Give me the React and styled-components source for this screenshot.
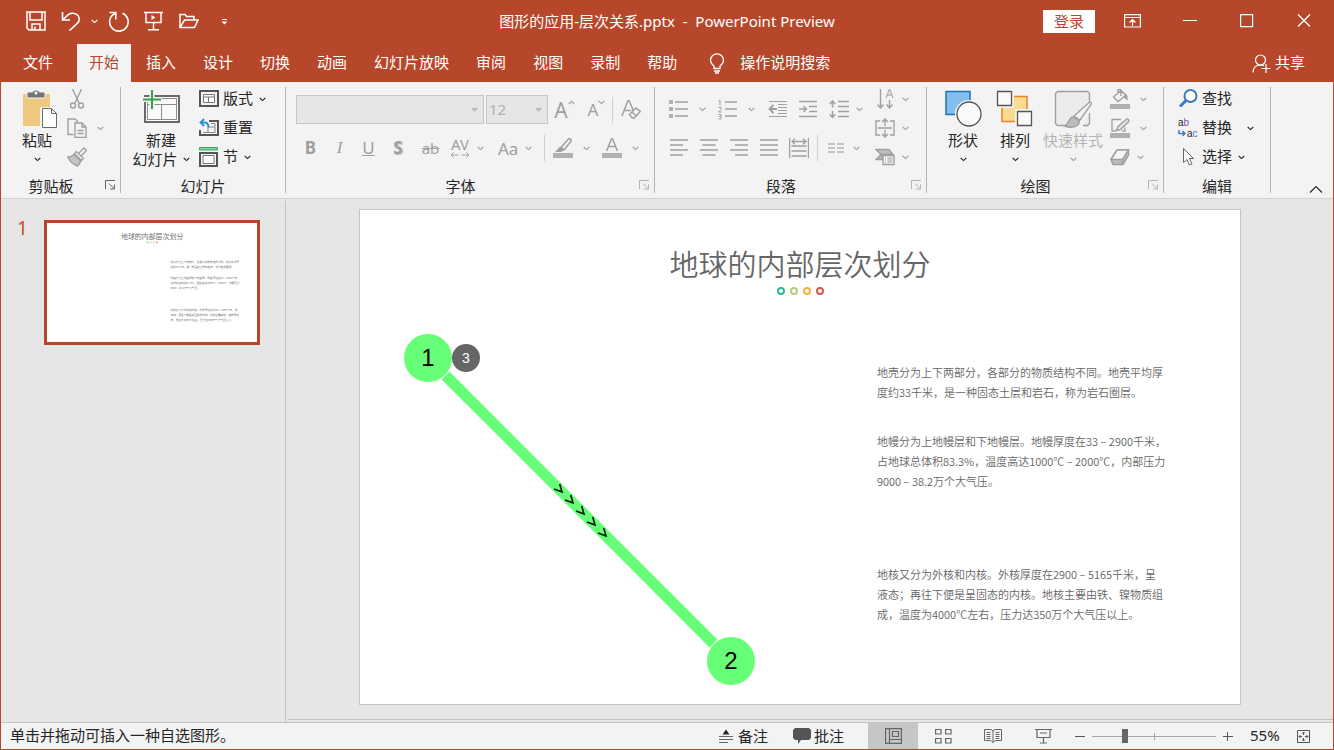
import React, { useState } from "react";
import styled, { createGlobalStyle, css } from "styled-components";

function App() {
  return (
    <>
      <GlobalStyle />
      <Window>
        <Header>
          <TitleBar />
          <TabBar />
        </Header>
        <Ribbon>
          <ClipboardGroup />
          <SlidesGroup />
          <FontGroup />
          <ParagraphGroup />
          <DrawingGroup />
          <EditingGroup />
          <Collapse aria-label="折叠功能区">
            <Icon w={14} h={8} sw={1.1}>
              <path d="M1 7.5 7 1.5l6 6" />
            </Icon>
          </Collapse>
        </Ribbon>
        <Workspace>
          <ThumbPane>
            <ThumbNumber>1</ThumbNumber>
            <Thumb>
              <ThumbScale>
                <SlideContent />
              </ThumbScale>
            </Thumb>
          </ThumbPane>
          <Stage>
            <Slide>
              <SlideContent />
              <Diagram />
            </Slide>
          </Stage>
        </Workspace>
        <StatusBar />
      </Window>
    </>
  );
}

export default App;

function Icon({ w = 20, h = 20, sw = 1, children }) {
  return (
    <svg
      width={w}
      height={h}
      viewBox={`0 0 ${w} ${h}`}
      fill="none"
      stroke="currentColor"
      strokeWidth={sw}
      aria-hidden="true"
    >
      {children}
    </svg>
  );
}

function Caret() {
  return (
    <Icon w={7} h={5} sw={1.1}>
      <path d="M.7 1 3.5 3.6 6.3 1" />
    </Icon>
  );
}

function TitleBar() {
  return (
    <TitleRow>
      <QuickAccess>
        <BarButton aria-label="保存">
          <Icon sw={1.5}>
            <path d="M1 1h18v18H3L1 17zM4 1v8h12V1M6 19v-6h8v6M9 15.5v3" />
          </Icon>
        </BarButton>
        <BarButton aria-label="撤消">
          <Icon sw={1.6}>
            <path d="M1.5 1v8H9M1.5 9 7 3.8C9 2 13 1.4 16 3.6c3.2 2.6 2.8 6.3.3 8.7L8.5 19.5" />
          </Icon>
        </BarButton>
        <BarButton $w={13} aria-label="撤消选项">
          <Caret />
        </BarButton>
        <BarButton aria-label="重复">
          <Icon w={21} h={21} sw={1.6}>
            <path d="M14.5 2.2A9.3 9.3 0 1 1 4 4.5L7.5 1.8M1.5 1.5h6.3v7" />
          </Icon>
        </BarButton>
        <BarButton aria-label="从头开始">
          <Icon sw={1.5}>
            <path d="M0 1.5h19M2 2v9.5h15V2M9.5 12v6.5M4 18.7h11" />
            <path d="M7.5 4v5l4-2.5z" fill="currentColor" stroke="none" />
          </Icon>
        </BarButton>
        <BarButton aria-label="打开">
          <Icon w={20} h={16} sw={1.5}>
            <path d="M1 14.5V1.5h5l1.5 2H15V7M1 14.5 5.5 7H19l-3.5 7.5z" />
          </Icon>
        </BarButton>
        <BarButton $w={37} aria-label="自定义快速访问工具栏">
          <Icon w={7} h={8}>
            <path d="M1 2.5h5" />
            <path d="M.5 4.5h6l-3 3z" fill="currentColor" stroke="none" />
          </Icon>
        </BarButton>
      </QuickAccess>
      <DocTitle>{"图形的应用-层次关系.pptx  -  PowerPoint Preview"}</DocTitle>
      <WindowControls>
        <SignIn>登录</SignIn>
        <BarButton $w={57} aria-label="功能区显示选项">
          <Icon w={17} h={14} sw={1.2}>
            <path d="M.6.6h15.8V13H.6zM.5 3.5h16M8.500 12V6M5.500 8.500l3-3 3 3" />
          </Icon>
        </BarButton>
        <BarButton $w={57} aria-label="最小化">
          <Icon w={14} h={14}>
            <path d="M0 6.500h14" />
          </Icon>
        </BarButton>
        <BarButton $w={57} aria-label="最大化">
          <Icon w={14} h={14} sw={1.2}>
            <path d="M.6.6h12v12H.6z" />
          </Icon>
        </BarButton>
        <BarButton $w={57} aria-label="关闭">
          <Icon w={14} h={14} sw={1.4}>
            <path d="m1 .5 12 12M13 .5 1 12.500" />
          </Icon>
        </BarButton>
      </WindowControls>
    </TitleRow>
  );
}

const tabs = ["开始", "插入", "设计", "切换", "动画", "幻灯片放映", "审阅", "视图", "录制", "帮助"];

function TabBar() {
  const [active, setActive] = useState("开始");
  return (
    <TabRow>
      <FileTab>文件</FileTab>
      {tabs.map((tab) => (
        <Tab key={tab} $active={tab === active} onClick={() => setActive(tab)}>
          {tab}
        </Tab>
      ))}
      <TellMe>
        <Icon w={16} h={21} sw={1.3}>
          <path d="M5 15.5V13C3 11.5 1.5 10 1.5 7.3a6.500 6.500 0 0 1 13 0C14.5 10 13 11.5 11 13v2.500zM5 18h6M6 20h4" />
        </Icon>
        <Label>操作说明搜索</Label>
      </TellMe>
      <Share>
        <Icon w={19} h={19} sw={1.2}>
          <circle cx="8.5" cy="6" r="5" />
          <path d="M1 18.5c0-5 3-7.5 7.5-7.5 1.5 0 2.5.3 3.5.8M14 10v9M9.5 14.5h9" />
        </Icon>
        <Label>共享</Label>
      </Share>
    </TabRow>
  );
}

function Group({ title, width, launcher, muted, children }) {
  return (
    <GroupBox $w={width}>
      <GroupBody>{children}</GroupBody>
      <GroupFooter>
        <GroupTitle>{title}</GroupTitle>
        {launcher && (
          <Launcher $muted={muted} aria-label={title + "设置"}>
            <Icon w={11} h={10}>
              <path d="M.5 9V.5H10M4 3.5l5.5 5.5M9.5 4.5V9H5" />
            </Icon>
          </Launcher>
        )}
      </GroupFooter>
    </GroupBox>
  );
}

function ClipboardGroup() {
  return (
    <Group title="剪贴板" width={120} launcher>
      <LargeButton $w={56} $start={8}>
        <Icon w={40} h={40}>
          <path d="M6 4h27v32H6z" fill="#edc87e" stroke="none" />
          <path d="M10 2h5.500a4 4 0 0 1 7 0H28v6H10z" fill="#757575" stroke="#f3f3f3" />
          <circle cx="19" cy="3" r="1.500" fill="#fff" stroke="none" />
          <path d="M23 17h11l7 7v14H23z" fill="#f3f3f3" stroke="none" />
          <path d="M25.500 18.500h9l5 5v14h-14zM34.500 18.500v5h5" fill="#fff" stroke="#6a6a6a" />
        </Icon>
        <span>粘贴</span>
        <CaretLine>
          <Caret />
        </CaretLine>
      </LargeButton>
      <Stack>
        <ToolButton disabled aria-label="剪切">
          <Icon sw={1.4}>
            <path d="M5.5 0 12 14M14.5 0 8 14" />
            <circle cx="6" cy="16.500" r="2.500" />
            <circle cx="14" cy="16.500" r="2.500" />
          </Icon>
        </ToolButton>
        <ToolButton disabled $gap={10} aria-label="复制">
          <Icon sw={1.4}>
            <path d="M6.5 16.5H1V1h7l3 3" />
            <path d="M8 5h7l4 4v10.5H8zM15 5v4h4M10.5 12.5h6M10.5 15.5h6" />
          </Icon>
          <Caret />
        </ToolButton>
        <ToolButton disabled aria-label="格式刷">
          <Icon sw={1.4}>
            <path d="m12 6 5-5 2.500 2.500-5 5M9.500 4.500l7 7-2 2-7-7z" />
            <path d="M7 7.500C5 9.500 3 10 .8 10c2 4 6.200 8 9.700 9 1.500-1.500 3-3.500 3-5z" fill="#c4c4c4" />
          </Icon>
        </ToolButton>
      </Stack>
    </Group>
  );
}

function SlidesGroup() {
  return (
    <Group title="幻灯片" width={165}>
      <LargeButton $w={64} $start={8}>
        <Icon w={38} h={40}>
          <path d="M3 6h34v26H3z" fill="#fafafa" stroke="#6a6a6a" strokeWidth="2" />
          <path d="M5.500 8.500h29v21h-29zM6 14.500h28M19.500 14.500V29" stroke="#8c8c8c" />
          <path d="M10 0v20M0 9.500h20" stroke="#f3f3f3" strokeWidth="5" />
          <path d="M10 0v19M1 9.500h18" stroke="#2fa350" strokeWidth="2" />
        </Icon>
        <span>新建</span>
        <CaretLine>
          幻灯片
          <Caret />
        </CaretLine>
      </LargeButton>
      <Stack $pad={4}>
        <ToolButton $gap={4}>
          <Icon>
            <path d="M1 2h18v15H1z" stroke="#555" strokeWidth="2" />
            <path d="M4.500 5.500h11v8h-11zM4.500 8h11M9.500 8v5.500" stroke="#777" fill="#fff" />
          </Icon>
          <Label>版式</Label>
          <Caret />
        </ToolButton>
        <ToolButton $gap={4}>
          <Icon>
            <path d="M10 3h9v14H1v-5" stroke="#555" strokeWidth="2" />
            <path d="M4 14.500h12v-9h-4M9 9h7M9 9v5" stroke="#8a8a8a" />
            <path d="M5 1 1.500 4.500 5 8M2 4.500h3.500c3 0 4 2 4 5" stroke="#2b8fd8" strokeWidth="1.800" />
          </Icon>
          <Label>重置</Label>
        </ToolButton>
        <ToolButton $gap={4}>
          <Icon>
            <path d="M.5.5h18v2.500H.5z" fill="#8fd0a4" stroke="#3ba55d" />
            <path d="M1 6h17v13H1z" stroke="#555" strokeWidth="2" />
            <path d="M4 8.500h11v8H4z" fill="#fff" stroke="#777" />
          </Icon>
          <Label>节</Label>
          <Caret />
        </ToolButton>
      </Stack>
    </Group>
  );
}

function Dropdown({ label, value, width }) {
  return (
    <SelectBox $w={width}>
      <select aria-label={label} disabled defaultValue={value}>
        <option>{value}</option>
      </select>
      <Icon w={7} h={4}>
        <path d="M0 0h7L3.500 4z" fill="currentColor" stroke="none" />
      </Icon>
    </SelectBox>
  );
}

function FontGroup() {
  return (
    <Group title="字体" width={369} launcher muted>
      <Rows>
        <Row $h={29}>
          <Dropdown label="字体" value="" width={188} />
          <SizeGap />
          <Dropdown label="字号" value="12" width={62} />
          <GlyphButton disabled $w={33} $size={21} aria-label="增大字号">
            A
            <Raised>
              <Icon w={7} h={5} sw={1.2}>
                <path d="M.7 4 3.500 1.400 6.300 4" />
              </Icon>
            </Raised>
          </GlyphButton>
          <GlyphButton disabled $w={31} $size={17} aria-label="减小字号">
            A
            <Raised>
              <Caret />
            </Raised>
          </GlyphButton>
          <Divider />
          <GlyphButton disabled $w={36} aria-label="清除所有格式">
            <Icon sw={1.5}>
              <path d="M1 16 7 .5h1L13 12M3.500 10.500H10" />
              <path d="m8.500 14.500 6.500-6.500 4.300 3.500-6 6.500h-2zM11 12l4.500 4" fill="#f3f3f3" />
            </Icon>
          </GlyphButton>
        </Row>
        <Row $h={26}>
          <GlyphButton disabled $w={29}>
            <b>B</b>
          </GlyphButton>
          <GlyphButton disabled $w={29}>
            <Serif>I</Serif>
          </GlyphButton>
          <GlyphButton disabled $w={29}>
            <u>U</u>
          </GlyphButton>
          <GlyphButton disabled $w={30}>
            <Shadowed>S</Shadowed>
          </GlyphButton>
          <GlyphButton disabled $w={35} $size={15}>
            <Struck>ab</Struck>
          </GlyphButton>
          <ToolButton disabled $w={48} $gap={7}>
            <Spacing>
              AV
              <Icon h={6}>
                <path d="M8.500 3H1M3.500.5 1 3l2.500 2.500M11.500 3H19M16.500.5 19 3l-2.500 2.500" />
              </Icon>
            </Spacing>
            <Caret />
          </ToolButton>
          <ToolButton disabled $w={48} $gap={7} $size={17}>
            Aa
            <Caret />
          </ToolButton>
          <Divider $after={6} />
          <ToolButton disabled $w={49} $gap={10} aria-label="文本突出显示颜色">
            <Icon>
              <path d="M0 15h20v5H0z" fill="#b0b0b0" stroke="none" />
              <path d="M8 9.500 15.500 1c1-1 3.500 1 2.500 2.300L11 12zM7.500 9.500l3.500 3" strokeWidth="1.500" />
              <path d="M7 8.500 2 14h6l3-2z" fill="currentColor" stroke="none" />
            </Icon>
            <Caret />
          </ToolButton>
          <ToolButton disabled $w={49} $gap={10} aria-label="字体颜色">
            <Icon>
              <path d="M0 15h20v5H0z" fill="#b0b0b0" stroke="none" />
              <path d="M4.500 13 9.700.5h.6L15.500 13M6.500 8.500h7" strokeWidth="1.500" />
            </Icon>
            <Caret />
          </ToolButton>
        </Row>
      </Rows>
    </Group>
  );
}

function ParagraphGroup() {
  return (
    <Group title="段落" width={272} launcher muted>
      <Rows $start={12} $w={206}>
        <Row $h={29}>
          <ToolButton disabled $w={49} $gap={10} aria-label="项目符号">
            <Icon>
              <path d="M0 0h4v4H0zM0 7h4v4H0zM0 14h4v4H0z" fill="#b0b0b0" stroke="none" />
              <path d="M6 2h13M6 9h13M6 16h13" strokeWidth="1.500" />
            </Icon>
            <Caret />
          </ToolButton>
          <ToolButton disabled $w={49} $gap={10} aria-label="编号">
            <Icon>
              <path d="M.5 1 2 .5v5M.5 7.500h2.500v2l-2.500 2.500h3M.5 14.500h2.500v4.500H.5M1 16.500h2" />
              <path d="M7 2h12M7 9h12M7 16h12" strokeWidth="1.500" />
            </Icon>
            <Caret />
          </ToolButton>
          <ToolButton disabled $w={31} aria-label="减少缩进">
            <Icon>
              <path d="M2 1.500h18M11 4.500h9M11 7.500h9M11 10.500h9M11 13.500h9M2 16.500h18" />
              <path d="M10 9H3M6.500 5l-4 4 4 4" strokeWidth="1.800" />
            </Icon>
          </ToolButton>
          <ToolButton disabled $w={31} aria-label="增加缩进">
            <Icon>
              <path d="M1 1.500h18M11 6.500h8M11 11.500h8M1 16.500h18" strokeWidth="1.500" />
              <path d="M1 9h7M5.500 6l3 3-3 3" strokeWidth="1.400" />
            </Icon>
          </ToolButton>
          <ToolButton disabled $gap={7} aria-label="行距">
            <Icon>
              <path d="M3.500 1v6.500M.8 4l2.700-3 2.700 3M3.500 11v6.500M.8 14.500l2.700 3 2.700-3M9 1.500h11M9 6.500h11M9 11.500h11M9 16.500h11" strokeWidth="1.500" />
            </Icon>
            <Caret />
          </ToolButton>
        </Row>
        <Row $h={26}>
          <ToolButton disabled $w={30} aria-label="左对齐">
            <Icon>
              <path d="M1 2h18M1 7h13M1 12h18M1 17h13" strokeWidth="1.500" />
            </Icon>
          </ToolButton>
          <ToolButton disabled $w={30} aria-label="居中">
            <Icon>
              <path d="M1 2h18M3.500 7h13M1 12h18M3.500 17h13" strokeWidth="1.500" />
            </Icon>
          </ToolButton>
          <ToolButton disabled $w={30} aria-label="右对齐">
            <Icon>
              <path d="M1 2h18M6 7h13M1 12h18M6 17h13" strokeWidth="1.500" />
            </Icon>
          </ToolButton>
          <ToolButton disabled $w={30} aria-label="两端对齐">
            <Icon>
              <path d="M1 2h18M1 7h18M1 12h18M1 17h18" strokeWidth="1.500" />
            </Icon>
          </ToolButton>
          <ToolButton disabled $w={30} aria-label="分散对齐">
            <Icon>
              <path d="M.5 0v20M19.500 0v20M2.500 8h15M2.500 13h15M2.500 18h15M3 3.500h14M6 .8 3 3.500l3 2.700M14 .8l3 2.700-3 2.700" strokeWidth="1.400" />
            </Icon>
          </ToolButton>
          <Divider $after={6} />
          <ToolButton disabled $gap={7} aria-label="分栏">
            <Icon>
              <path d="M2 6h7M2 10h7M2 14h7M11 6h7M11 10h7M11 14h7" strokeWidth="1.400" stroke="#b4b4b4" />
            </Icon>
            <Caret />
          </ToolButton>
        </Row>
      </Rows>
      <Stack>
        <ToolButton disabled $gap={7} aria-label="文字方向">
          <Icon sw={1.4}>
            <path d="M5.500 0v19M2.500 15.500l3 3.500 3-3.500M14.500 11v8M11.500 15.500l3 3.500 3-3.500" />
            <path d="m11 9 3.300-8.500h.4L18 9M12 6h5" stroke="#b5b5b5" />
          </Icon>
          <Caret />
        </ToolButton>
        <ToolButton disabled $gap={7} aria-label="对齐文本">
          <Icon sw={1.4}>
            <path d="M5 3H1v14h4M15 3h4v14h-4M3 10h14M10 1v7M7 4l3-3 3 3M10 12v7M7 16l3 3 3-3" />
          </Icon>
          <Caret />
        </ToolButton>
        <ToolButton disabled $gap={7} aria-label="转换为 SmartArt">
          <Icon sw={1.4}>
            <path d="M1 2.500h13l4 5H6zM1 12.500l5-5 2 5z" fill="#bdbdbd" />
            <path d="M8 8.500h11v9H8z" fill="#f3f3f3" />
            <path d="M10 11h1M12.500 11h5M10 13h1M12.500 13h5M10 15h1M12.500 15h5" strokeWidth="1" />
          </Icon>
          <Caret />
        </ToolButton>
      </Stack>
    </Group>
  );
}

function DrawingGroup() {
  return (
    <Group title="绘图" width={237} launcher muted>
      <LargeButton $w={52} $start={10}>
        <Icon w={38} h={40}>
          <path d="M2 1.500h24v23H2z" fill="#83beec" stroke="#1e73bc" strokeWidth="1.500" />
          <circle cx="25" cy="24" r="14" fill="#f3f3f3" stroke="none" />
          <circle cx="25" cy="24" r="12" fill="#fafafa" stroke="#555" strokeWidth="1.300" />
        </Icon>
        <span>形状</span>
        <CaretLine>
          <Caret />
        </CaretLine>
      </LargeButton>
      <LargeButton $w={52}>
        <Icon w={38} h={40}>
          <path d="M6 6.500h25v25H6z" fill="#f8dc8f" stroke="#e8832a" strokeWidth="1.500" />
          <path d="M0 0h18v18H0zM19 19h18v18H19z" fill="#f3f3f3" stroke="none" />
          <path d="M1.500 1.500h14v14h-14zM21.500 21.500h14v14h-14z" fill="#fafafa" stroke="#555" strokeWidth="1.300" />
        </Icon>
        <span>排列</span>
        <CaretLine>
          <Caret />
        </CaretLine>
      </LargeButton>
      <LargeButton $w={64} disabled>
        <Icon w={38} h={40} sw={1.4}>
          <path d="M12 35.500H3.500l-2-2v-30l2-2h30l2 2V13M35.500 23v10.500l-2 2H29" fill="#ececec" />
          <path d="M20 26 34.500 13c2-1.300 3.500-.3 2.500 1.500L26 30z" fill="#f3f3f3" />
          <path d="M19 27c-4 0-4 7-8 9 5 2.500 14 1.500 14.500-5z" fill="#bdbdbd" />
        </Icon>
        <span>快速样式</span>
        <CaretLine>
          <Caret />
        </CaretLine>
      </LargeButton>
      <Stack $pad={3}>
        <ToolButton disabled $gap={10} aria-label="形状填充">
          <Icon>
            <path d="M0 15h20v5H0z" fill="#b0b0b0" stroke="none" />
            <path d="M3.500 8 11 1.500l5 4.500-8 6.500zM8 5V1.500c0-1.500 3-1.500 3 0V7" strokeWidth="1.400" />
            <path d="M15.500 5c2 1 2.500 3.500 2 7-1-2-3-3-4-4z" fill="currentColor" stroke="none" />
          </Icon>
          <Caret />
        </ToolButton>
        <ToolButton disabled $gap={10} aria-label="形状轮廓">
          <Icon>
            <path d="M0 15h20v5H0z" fill="#b0b0b0" stroke="none" />
            <path d="M11 1.500H2V13h4M15 9.500V13h-3" strokeWidth="1.300" />
            <path d="M6.500 12.500 8 8.500 16.500 1c1.500-.5 3 1.500 2 2.800L10.500 11.500z" fill="#e3e3e3" strokeWidth="1.400" />
          </Icon>
          <Caret />
        </ToolButton>
        <ToolButton disabled $gap={7} aria-label="形状效果">
          <Icon sw={1.5}>
            <path d="M1 12.500 7 3h11.500v5L13 17.500H3z" fill="#bdbdbd" />
            <path d="M1 12.500 7 3h11.500l-6 9.500z" fill="#f6f6f6" />
            <path d="M12.500 12.500v5" />
          </Icon>
          <Caret />
        </ToolButton>
      </Stack>
    </Group>
  );
}

function EditingGroup() {
  return (
    <Group title="编辑" width={107}>
      <Stack $start={12}>
        <ToolButton $gap={4}>
          <Icon>
            <circle cx="12.500" cy="7" r="6" fill="#fff" stroke="#3e7ab8" strokeWidth="2" />
            <path d="M8 11.500 2 17.500" stroke="#3e7ab8" strokeWidth="3" />
          </Icon>
          <Label>查找</Label>
        </ToolButton>
        <ToolButton $gap={4}>
          <ReplaceMark>
            <span>
              a<i>b</i>
            </span>
            <span>
              <Icon w={9} h={7}>
                <path d="M1 0v3.500h6M4.500 1 7 3.500 4.500 6" stroke="#3e7ab8" strokeWidth="1.400" />
              </Icon>
              a<em>c</em>
            </span>
          </ReplaceMark>
          <Label>替换</Label>
          <ReplaceCaret>
            <Caret />
          </ReplaceCaret>
        </ToolButton>
        <ToolButton $gap={4}>
          <Icon>
            <path d="M5.500 1.500v14l3.500-3 2.500 5.500 2.500-1-2.500-5.500h4z" fill="#fff" stroke="#666" />
          </Icon>
          <Label>选择</Label>
          <Caret />
        </ToolButton>
      </Stack>
    </Group>
  );
}

const dotColors = ["#2fb39b", "#b3cc7e", "#f3b13e", "#cf5b49"];

function SlideContent() {
  return (
    <Content>
      <SlideTitle>地球的内部层次划分</SlideTitle>
      <Dots>
        {dotColors.map((color) => (
          <Dot key={color} $color={color} />
        ))}
      </Dots>
      <Copy>
        <p>
          地壳分为上下两部分，各部分的物质结构不同。地壳平均厚
          <br />
          度约33千米，是一种固态土层和岩石，称为岩石圈层。
        </p>
        <p>
          地幔分为上地幔层和下地幔层。地幔厚度在33 – 2900千米，
          <br />
          占地球总体积83.3%，温度高达1000℃ – 2000℃，内部压力
          <br />
          9000 – 38.2万个大气压。
        </p>
        <p>
          地核又分为外核和内核。外核厚度在2900 – 5165千米，呈
          <br />
          液态；再往下便是呈固态的内核。地核主要由铁、镍物质组
          <br />
          成，温度为4000℃左右，压力达350万个大气压以上。
        </p>
      </Copy>
    </Content>
  );
}

function Diagram() {
  return (
    <DiagramLayer width="880" height="494" viewBox="0 0 880 494">
      <path d="M85.500 165.500 353.500 433.500" stroke="#66ff77" strokeWidth="11" />
      {[0, 1, 2, 3, 4].map((i) => (
        <path
          key={i}
          transform={`translate(${202 + i * 11} ${282 + i * 11})`}
          d="M-2.300-8 0 0-8-3"
          fill="none"
          stroke="#111"
          strokeWidth="1.600"
        />
      ))}
      <circle cx="68" cy="148" r="24" fill="#66ff77" />
      <circle cx="371" cy="451" r="24" fill="#66ff77" />
      <circle cx="106" cy="148" r="14" fill="#666" />
      <text x="68" y="156" fontSize="24">
        1
      </text>
      <text x="371" y="459" fontSize="24">
        2
      </text>
      <text x="106" y="153" fontSize="14" fill="#fff">
        3
      </text>
    </DiagramLayer>
  );
}

function StatusBar() {
  const [zoom, setZoom] = useState(25);
  return (
    <StatusRow>
      <Hint>单击并拖动可插入一种自选图形。</Hint>
      <StatusButton $gap={5} $end={25}>
        <Icon w={14} h={14}>
          <path d="M3.500 5.500h7L7 .5z" fill="currentColor" stroke="none" />
          <path d="M0 7.500h14M0 10.500h14M0 13.500h9" stroke="#666" />
        </Icon>
        <StatusLabel>备注</StatusLabel>
      </StatusButton>
      <StatusButton $gap={3} $end={24}>
        <Icon w={18} h={16}>
          <path d="M2 0h14l2 2v8l-2 2H8l-3 4v-4H2l-2-2V2z" fill="#555" stroke="none" />
        </Icon>
        <StatusLabel>批注</StatusLabel>
      </StatusButton>
      <ViewButton $active aria-label="普通视图">
        <Icon w={17} h={16} sw={1.2}>
          <path d="M.6.6h15.800v14.800H.6zM4.500.6v14.800M4.500 11.500h12M7.500 3.500h6v5h-6z" />
        </Icon>
      </ViewButton>
      <ViewButton aria-label="幻灯片浏览">
        <Icon w={17} h={16} sw={1.2}>
          <path d="M.6 1.500h5.400v4.500H.6zM10.600 1.500H16v4.500h-5.400zM.6 10.500h5.400V15H.6zM10.600 10.500H16V15h-5.400z" />
        </Icon>
      </ViewButton>
      <ViewButton aria-label="阅读视图">
        <Icon w={18} h={16}>
          <path d="M.5 1.500H7L9 3l2-1.500h6.500v11H11l-2 2-2-2H.5zM9 3v12" />
          <path d="M2.500 4.500h4M2.500 6.500h4M2.500 8.500h4M2.500 10.500h4M11.500 4.500h4M11.500 6.500h4M11.500 8.500h4M11.500 10.500h4" />
        </Icon>
      </ViewButton>
      <ViewButton aria-label="幻灯片放映">
        <Icon w={17} h={16} sw={1.2}>
          <path d="M0 1.500h17M2 1.500v8h13v-8M5 5h7M8.500 9.500v5M5 15h7" />
        </Icon>
      </ViewButton>
      <ZoomButton aria-label="缩小">
        <Icon w={10} h={11}>
          <path d="M0 5.500h10" />
        </Icon>
      </ZoomButton>
      <ZoomSlider
        type="range"
        aria-label="缩放"
        value={zoom}
        onChange={(e) => setZoom(Number(e.target.value))}
      />
      <ZoomButton aria-label="放大">
        <Icon w={10} h={11}>
          <path d="M0 5.500h10M4.500 1v9" />
        </Icon>
      </ZoomButton>
      <ZoomValue>55%</ZoomValue>
      <ZoomButton aria-label="使幻灯片适应当前窗口">
        <Icon w={13} h={13}>
          <path d="M.5.5h12v12H.5zM6.500 2v3M6.500 8v3M2 6.500h3M8 6.500h3M5 3.500 6.500 2 8 3.500M5 9.500 6.500 11 8 9.500M3.500 5 2 6.500 3.500 8M9.500 5 11 6.500 9.500 8" />
        </Icon>
      </ZoomButton>
    </StatusRow>
  );
}

const GlobalStyle = createGlobalStyle`
  * {
    box-sizing: border-box;
  }
  body {
    margin: 0;
    color: #262626;
    font-family: "Noto Sans", "Noto Sans CJK SC", sans-serif;
    font-size: 15px;
  }
  button {
    display: flex;
    align-items: center;
    margin: 0;
    padding: 0;
    border: 0;
    background: none;
    color: inherit;
    font: inherit;
    white-space: nowrap;
  }
  button:disabled {
    color: #a0a0a0;
  }
  svg {
    display: block;
    flex: none;
  }
`;
const Window = styled.div`
  display: flex;
  flex-direction: column;
  min-height: 100vh;
  border: 1px solid #b7472a;
  border-top: 0;
  background: #e6e6e6;
`;
const Header = styled.header`
  background: #b7472a;
  color: #fff;
`;
const TitleRow = styled.div`
  display: grid;
  grid-template-columns: 1fr auto 1fr;
  align-items: center;
  height: 42px;
`;
const QuickAccess = styled.div`
  display: flex;
  padding-left: 17px;
`;
const BarButton = styled.button`
  justify-content: center;
  width: ${(props) => props.$w || 35}px;
  height: 32px;
`;
const DocTitle = styled.div`
  padding-bottom: 2px;
  white-space: pre;
`;
const WindowControls = styled.div`
  display: flex;
  align-items: center;
  justify-content: flex-end;
  padding-right: 1px;
`;
const SignIn = styled.button`
  justify-content: center;
  width: 52px;
  height: 23px;
  margin-right: 9px;
  padding-bottom: 2px;
  background: #fff;
  color: #b7472a;
`;
const TabRow = styled.nav`
  display: flex;
  gap: 3px;
  height: 38px;
  margin-top: 2px;
  padding: 0 28px 0 10px;
`;
const Tab = styled.button`
  padding: 0 12px 4px;
  ${(props) =>
    props.$active &&
    css`
      background: #f3f3f3;
      color: #b7472a;
    `}
`;
const FileTab = styled(Tab)`
  margin-right: 9px;
`;
const TellMe = styled.button`
  gap: 15px;
  margin-left: 17px;
`;
const Share = styled.button`
  gap: 4px;
  margin-left: auto;
`;
const Label = styled.span`
  padding: 0 0 3px;
  & + svg {
    margin-left: 2px;
  }
`;
const Ribbon = styled.section`
  display: flex;
  height: 117px;
  padding: 5px 0;
  border-bottom: 1px solid #d2d2d2;
  background: #f3f3f3;
`;
const GroupBox = styled.div`
  display: flex;
  flex: none;
  flex-direction: column;
  width: ${(props) => props.$w}px;
  border-right: 1px solid #b4b4b4;
`;
const GroupBody = styled.div`
  display: flex;
  flex: 1;
`;
const GroupFooter = styled.div`
  display: flex;
  align-items: flex-end;
  height: 16px;
  line-height: 14px;
`;
const GroupTitle = styled.div`
  flex: 1;
  text-align: center;
`;
const Launcher = styled.button`
  justify-content: center;
  width: 19px;
  height: 16px;
  color: ${(props) => (props.$muted ? "#b4b4b4" : "#666")};
`;
const Collapse = styled.button`
  align-self: flex-end;
  margin: 0 10px 0 auto;
`;
const LargeButton = styled.button`
  flex-direction: column;
  align-self: flex-start;
  width: ${(props) => props.$w}px;
  margin-left: ${(props) => props.$start || 0}px;
  padding-top: 3px;
  line-height: 20px;
  &:disabled span {
    color: #b4b4b4;
  }
`;
const CaretLine = styled.div`
  display: flex;
  align-items: center;
  gap: 5px;
  height: 18px;
`;
const Stack = styled.div`
  display: flex;
  flex-direction: column;
  gap: 5px;
  margin-left: ${(props) => props.$start || 0}px;
  padding-left: ${(props) => props.$pad || 0}px;
`;
const ToolButton = styled.button`
  gap: ${(props) => props.$gap || 5}px;
  width: ${(props) => (props.$w ? props.$w + "px" : "auto")};
  height: 24px;
  padding-left: 2px;
  font-size: ${(props) => props.$size || 15}px;
`;
const Rows = styled.div`
  display: flex;
  flex-direction: column;
  gap: 11px;
  width: ${(props) => (props.$w ? props.$w + "px" : "auto")};
  margin-left: ${(props) => props.$start || 10}px;
  padding-top: 8px;
`;
const Row = styled.div`
  display: flex;
  align-items: center;
  height: ${(props) => props.$h}px;
`;
const SelectBox = styled.div`
  display: grid;
  align-items: center;
  width: ${(props) => props.$w}px;
  height: 29px;
  border: 1px solid #c6c6c6;
  background: #e6e6e6;
  color: #b9b9b9;
  > * {
    grid-area: 1 / 1;
  }
  select {
    width: 100%;
    height: 27px;
    padding: 0 2px 2px;
    border: 0;
    background: none;
    color: #a9b1ba;
    font: inherit;
    opacity: 1;
    appearance: none;
  }
  svg {
    justify-self: end;
    margin-right: 5px;
  }
`;
const SizeGap = styled.div`
  width: 2px;
`;
const GlyphButton = styled.button`
  justify-content: center;
  width: ${(props) => props.$w}px;
  height: 26px;
  font-size: ${(props) => props.$size || 17}px;
  line-height: 26px;
`;
const Raised = styled.span`
  align-self: flex-start;
  padding-top: 3px;
`;
const Serif = styled.i`
  font-family: "Liberation Serif", serif;
`;
const Shadowed = styled.b`
  text-shadow: 1px 1px 1px #bbb;
`;
const Struck = styled.s`
  padding: 0 2px;
`;
const Spacing = styled.span`
  display: flex;
  flex-direction: column;
  align-items: center;
  width: 20px;
  padding-bottom: 2px;
  line-height: 16px;
`;
const Divider = styled.div`
  width: 1px;
  height: 26px;
  margin-right: ${(props) => props.$after || 0}px;
  background: #d0d0d0;
`;
const ReplaceMark = styled.span`
  width: 20px;
  font-family: "Liberation Sans", Arial, sans-serif;
  font-size: 10px;
  line-height: 10px;
  span {
    display: flex;
    align-items: center;
    height: 11px;
  }
  i {
    color: #8b4fb0;
    font-style: normal;
  }
  em {
    color: #3e7ab8;
    font-style: normal;
  }
`;
const ReplaceCaret = styled.span`
  padding-left: 11px;
`;
const Workspace = styled.div`
  display: flex;
  flex: 1;
`;
const ThumbPane = styled.aside`
  display: flex;
  flex: none;
  align-items: flex-start;
  width: 285px;
  margin-top: 2px;
  padding: 19px 0 0 16px;
  border-right: 1px solid #c3c3c3;
`;
const ThumbNumber = styled.div`
  width: 27px;
  color: #d24726;
  font-size: 19px;
  line-height: 16px;
`;
const Thumb = styled.div`
  width: 216px;
  height: 125px;
  overflow: hidden;
  border: 3px solid #b7472a;
  background: #fff;
`;
const ThumbScale = styled.div`
  width: 880px;
  height: 494px;
  transform: scale(0.239);
  transform-origin: 0 0;
`;
const Stage = styled.main`
  flex: 1;
  margin: 0 0 2px 2px;
  padding: 10px 92px 13px 71px;
  border-bottom: 1px solid #c3c3c3;
`;
const Slide = styled.article`
  position: relative;
  aspect-ratio: 16 / 9;
  border: 1px solid #c6c6c6;
  background: #fff;
`;
const Content = styled.div`
  padding-top: 35px;
  color: #666;
`;
const SlideTitle = styled.h1`
  margin: 0;
  font-size: 29px;
  font-weight: 350;
  line-height: 40px;
  text-align: center;
`;
const Dots = styled.div`
  display: flex;
  justify-content: center;
  gap: 5px;
  margin-top: 2px;
`;
const Dot = styled.div`
  width: 8px;
  height: 8px;
  border: 2px solid ${(props) => props.$color};
  border-radius: 50%;
`;
const Copy = styled.div`
  width: 290px;
  margin: 67px 73px 0 auto;
  font-family: "Noto Sans CJK SC", sans-serif;
  font-size: 11px;
  font-weight: 350;
  line-height: 20px;
  white-space: nowrap;
  p {
    margin: 0 0 29px;
  }
  p:last-child {
    margin: 73px 0 0;
  }
`;
const DiagramLayer = styled.svg`
  position: absolute;
  top: 0;
  left: 0;
  font-family: "Liberation Sans", Arial, sans-serif;
  text-anchor: middle;
`;
const StatusRow = styled.footer`
  display: flex;
  align-items: stretch;
  height: 27px;
  border-top: 1px solid #c3c3c3;
  background: #f3f3f3;
`;
const Hint = styled.div`
  flex: 1;
  padding-left: 9px;
  line-height: 24px;
`;
const StatusButton = styled.button`
  gap: ${(props) => props.$gap}px;
  margin-right: ${(props) => props.$end}px;
`;
const StatusLabel = styled.span`
  padding-bottom: 2px;
`;
const ViewButton = styled.button`
  justify-content: center;
  width: 50px;
  background: ${(props) => (props.$active ? "#c6c6c6" : "none")};
  color: #666;
`;
const ZoomButton = styled.button`
  color: #555;
  margin: 0 7px;
  &:last-child {
    margin: 0 23px 0 10px;
  }
`;
const ZoomSlider = styled.input`
  width: 124px;
  height: 26px;
  margin: 0;
  appearance: none;
  background: linear-gradient(#a6a6a6, #a6a6a6) center / 100% 1px no-repeat,
    linear-gradient(#a6a6a6, #a6a6a6) center / 1px 7px no-repeat;
  &::-webkit-slider-thumb {
    width: 6px;
    height: 14px;
    appearance: none;
    background: #666;
  }
`;
const ZoomValue = styled.output`
  width: 37px;
  margin-left: 10px;
  line-height: 24px;
`;
